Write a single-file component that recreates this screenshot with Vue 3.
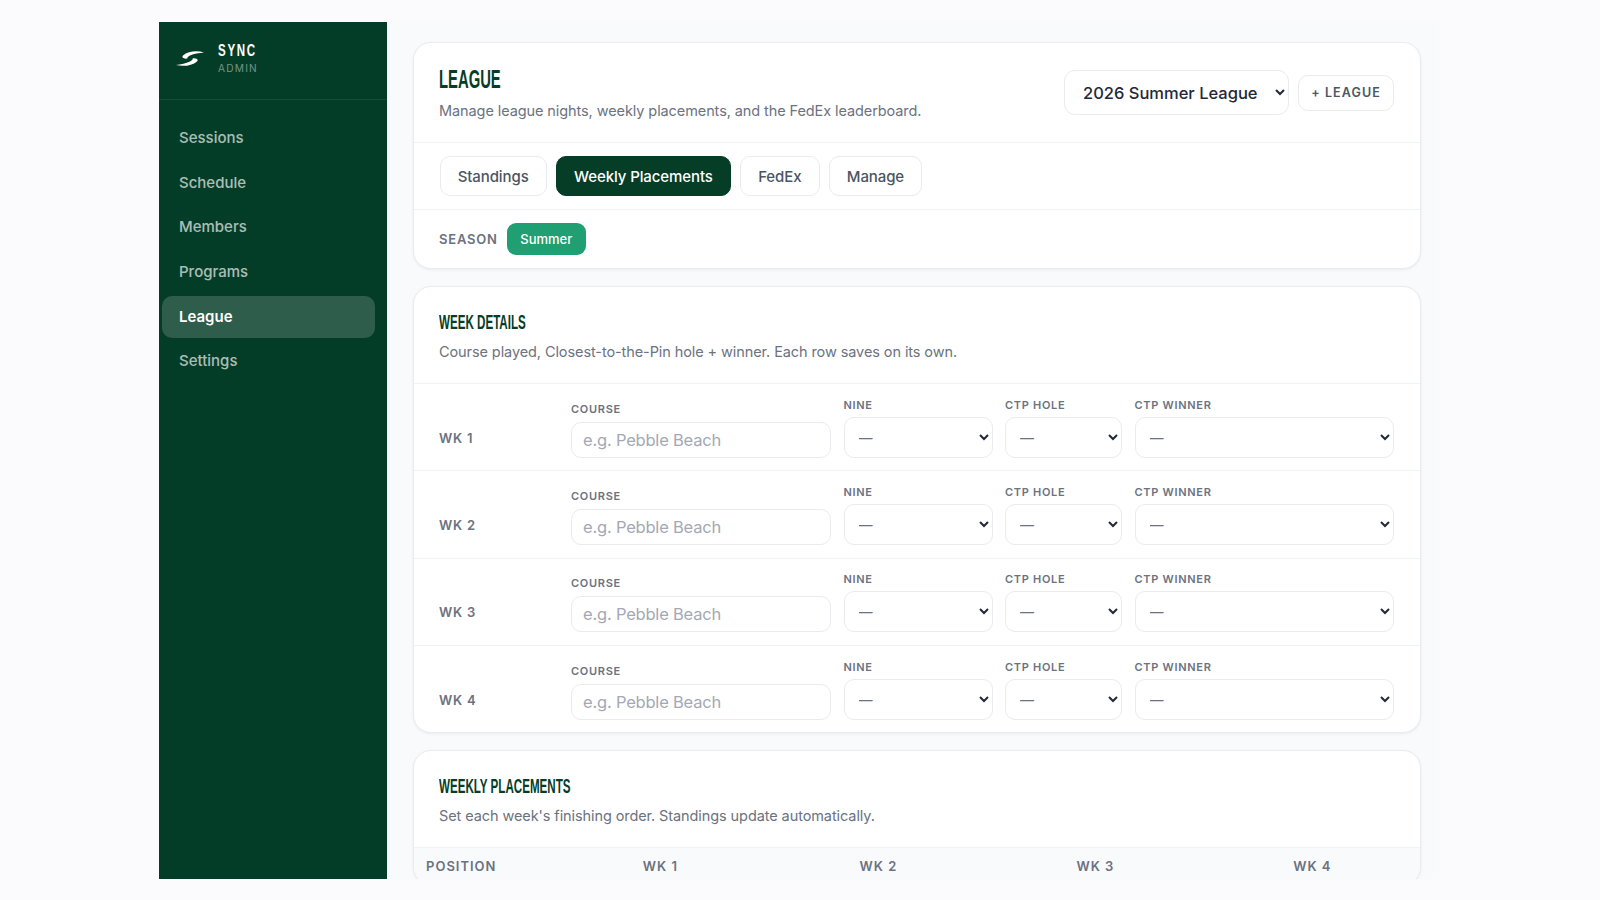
<script setup>
import { ref } from 'vue'

const navItems = ['Sessions', 'Schedule', 'Members', 'Programs', 'League', 'Settings']
const activeNav = ref('League')

const tabs = ['Standings', 'Weekly Placements', 'FedEx', 'Manage']
const activeTab = ref('Weekly Placements')

const weeks = ['WK 1', 'WK 2', 'WK 3', 'WK 4']
</script>

<template>
  <div class="frame">
    <!-- Sidebar -->
    <aside class="sidebar">
      <div class="brand">
        <svg class="brand-mark" viewBox="0 0 28 15" width="28" height="15" fill="#fff">
          <path d="M28 1.4C21 -.6 12 0 7 4.6 5.2 6.4 7.4 8 11.4 7.6 11 6.8 11.8 5.4 14 4.4 18 2.6 23 1.9 28 1.4Z" />
          <path d="M0 14C7 15.6 16 15 21 10.4 22.8 8.6 20.6 7 16.6 7.4 17 8.2 16.2 9.6 14 10.6 10 12.4 5 13.5 0 14Z" />
        </svg>
        <div class="brand-text">
          <div class="brand-name">SYNC</div>
          <div class="brand-sub">ADMIN</div>
        </div>
      </div>
      <nav class="nav">
        <a
          v-for="item in navItems"
          :key="item"
          class="nav-item"
          :class="{ active: item === activeNav }"
          @click="activeNav = item"
        >
          {{ item }}
        </a>
      </nav>
    </aside>

    <main class="main">
      <!-- League header -->
      <section class="card">
        <div class="league-head">
          <div>
            <h1 class="page-title">LEAGUE</h1>
            <p class="muted">Manage league nights, weekly placements, and the FedEx leaderboard.</p>
          </div>
          <div class="league-actions">
            <select class="league-select">
              <option>2026 Summer League</option>
            </select>
            <button class="btn-add">+ LEAGUE</button>
          </div>
        </div>
        <div class="tabs">
          <button
            v-for="tab in tabs"
            :key="tab"
            class="tab"
            :class="{ active: tab === activeTab }"
            @click="activeTab = tab"
          >
            {{ tab }}
          </button>
        </div>
        <div class="season">
          <span class="season-label">SEASON</span>
          <button class="season-pill">Summer</button>
        </div>
      </section>

      <!-- Week details -->
      <section class="card">
        <div class="section-head">
          <h2 class="section-title">WEEK DETAILS</h2>
          <p class="muted">Course played, Closest-to-the-Pin hole + winner. Each row saves on its own.</p>
        </div>
        <div v-for="week in weeks" :key="week" class="week-row">
          <div class="week-name">{{ week }}</div>
          <label class="field">
            <span class="field-label">COURSE</span>
            <input class="field-input" type="text" placeholder="e.g. Pebble Beach" />
          </label>
          <label class="field">
            <span class="field-label">NINE</span>
            <select class="field-select"><option>—</option></select>
          </label>
          <label class="field">
            <span class="field-label">CTP HOLE</span>
            <select class="field-select"><option>—</option></select>
          </label>
          <label class="field">
            <span class="field-label">CTP WINNER</span>
            <select class="field-select"><option>—</option></select>
          </label>
        </div>
      </section>

      <!-- Weekly placements -->
      <section class="card">
        <div class="section-head">
          <h2 class="section-title">WEEKLY PLACEMENTS</h2>
          <p class="muted">Set each week's finishing order. Standings update automatically.</p>
        </div>
        <div class="table-head">
          <div>POSITION</div>
          <div v-for="week in weeks" :key="week">{{ week }}</div>
        </div>
      </section>
    </main>
  </div>
</template>

<style scoped>
.frame {
  display: flex;
  width: 1280px;
  height: 857px;
  margin: 22px 0 0 159px;
  background: #f9fafb;
  overflow: hidden;
  font-family: Inter, 'Noto Sans', sans-serif;
}

.sidebar {
  flex: 0 0 228px;
  background: #043d27;
}

.brand {
  display: flex;
  align-items: center;
  gap: 14px;
  height: 73px;
  padding: 0 0 4px 17px;
  border-bottom: 1px solid rgba(255, 255, 255, 0.08);
}

.brand-text {
  display: flex;
  flex-direction: column;
  gap: 2px;
}

/* no condensed display face installed, so the headings are squeezed */
.brand-name {
  font-family: 'Liberation Sans', sans-serif;
  font-size: 17px;
  font-weight: 700;
  letter-spacing: 2.5px;
  line-height: 18px;
  color: #fff;
  transform: scaleX(0.68);
  transform-origin: left center;
}

.brand-sub {
  font-size: 10.2px;
  letter-spacing: 1.2px;
  line-height: 13px;
  color: rgba(255, 255, 255, 0.45);
}

.nav {
  display: flex;
  flex-direction: column;
  gap: 2.7px;
  padding: 17px 12px 0 3px;
}

.nav-item {
  display: block;
  height: 42px;
  line-height: 42px;
  padding-left: 17px;
  border-radius: 10px;
  font-size: 15px;
  font-weight: 500;
  color: rgba(255, 255, 255, 0.68);
  cursor: pointer;
}

.nav-item.active {
  background: rgba(255, 255, 255, 0.17);
  color: #fff;
  font-weight: 600;
}

.main {
  flex: 1;
  padding: 20px 18px 0 26px;
  overflow: hidden;
}

.card {
  background: #fff;
  border: 1px solid #e9ebef;
  border-radius: 18px;
  box-shadow: 0 1px 3px rgba(16, 24, 40, 0.06);
  margin-bottom: 17px;
  overflow: hidden;
}

.league-head {
  display: flex;
  justify-content: space-between;
  align-items: center;
  height: 99px;
  padding: 0 26px 0 25px;
  border-bottom: 1px solid #f1f2f5;
}

.page-title {
  margin: 0 0 8px 0;
  font-family: 'Liberation Sans', sans-serif;
  font-size: 26px;
  font-weight: 700;
  line-height: 28px;
  color: #063d27;
  transform: scaleX(0.57);
  transform-origin: left center;
}

.muted {
  margin: 0;
  font-size: 14.5px;
  letter-spacing: -0.09px;
  line-height: 20px;
  color: #6b7280;
}

.league-actions {
  display: flex;
  align-items: center;
  gap: 9px;
}

.league-select {
  width: 225px;
  height: 45px;
  padding: 0 0 0 14px;
  border: 1px solid #e9ebef;
  border-radius: 11px;
  background: #fff;
  font-family: inherit;
  font-size: 16.5px;
  font-weight: 500;
  color: #1f2937;
}

.btn-add {
  height: 36px;
  width: 96px;
  padding: 0;
  border: 1px solid #e9ebef;
  border-radius: 10px;
  background: #fff;
  font-family: inherit;
  font-size: 12.5px;
  font-weight: 600;
  letter-spacing: 1.1px;
  color: #4b5563;
}

.tabs {
  display: flex;
  gap: 9px;
  height: 66px;
  align-items: center;
  padding: 0 25px 0 25.5px;
  border-bottom: 1px solid #f1f2f5;
}

.tab {
  height: 40px;
  padding: 0 17.2px;
  border: 1px solid #e9ebef;
  border-radius: 10px;
  background: #fff;
  font-family: inherit;
  font-size: 15px;
  font-weight: 500;
  letter-spacing: -0.1px;
  color: #4b5563;
}

.tab.active {
  background: #053d27;
  border-color: #053d27;
  color: #fff;
}

.season {
  display: flex;
  align-items: center;
  gap: 9px;
  height: 58px;
  padding: 0 25px;
}

.season-label {
  font-size: 13px;
  font-weight: 600;
  letter-spacing: 0.8px;
  color: #6b7280;
}

.season-pill {
  height: 32px;
  width: 79px;
  padding: 0;
  border: none;
  border-radius: 9px;
  background: #1f9f72;
  font-family: inherit;
  font-size: 13px;
  font-weight: 500;
  color: #fff;
}

.section-head {
  padding: 23px 25px 21px;
}

.section-title {
  margin: 0 0 8px 0;
  font-family: 'Liberation Sans', sans-serif;
  font-size: 20px;
  font-weight: 700;
  line-height: 24px;
  color: #063d27;
  transform: scaleX(0.58);
  transform-origin: left center;
}

.week-row {
  display: grid;
  grid-template-columns: 119.5px 260px 149px 117px 1fr;
  gap: 12.5px;
  align-items: end;
  height: 87.3px;
  box-sizing: border-box;
  padding: 0 26px 12.5px 25px;
  border-top: 1px solid #f1f2f5;
}

.week-name {
  align-self: end;
  height: 41px;
  line-height: 43px;
  font-size: 13px;
  font-weight: 600;
  letter-spacing: 0.8px;
  color: #6b7280;
}

.field {
  display: flex;
  flex-direction: column;
  gap: 5px;
}

.field-label {
  font-size: 11px;
  font-weight: 600;
  letter-spacing: 0.7px;
  line-height: 14px;
  color: #6b7280;
}

.field-input {
  height: 36px;
  box-sizing: border-box;
  margin-top: 1px;
  padding: 0 11px;
  border: 1px solid #e9ebef;
  border-radius: 10px;
  background: #fff;
  font-family: inherit;
  font-size: 16.5px;
  letter-spacing: -0.2px;
  color: #1f2937;
  outline: none;
}

.field-input::placeholder {
  color: #a3a8b4;
}

.field-select {
  height: 41px;
  box-sizing: border-box;
  padding: 0 0 0 10px;
  border: 1px solid #e9ebef;
  border-radius: 10px;
  background: #fff;
  font-family: inherit;
  font-size: 14px;
  color: #1f2937;
  -webkit-text-fill-color: #6b7280;
}

.table-head {
  display: grid;
  grid-template-columns: repeat(5, 216.8px);
  height: 36px;
  align-items: center;
  padding-left: 12px;
  background: #f9fafb;
  border-top: 1px solid #f1f2f5;
  font-size: 13px;
  font-weight: 600;
  letter-spacing: 1px;
  color: #6b7280;
}
</style>

<style>
body {
  background: #fbfbfe;
}
</style>
